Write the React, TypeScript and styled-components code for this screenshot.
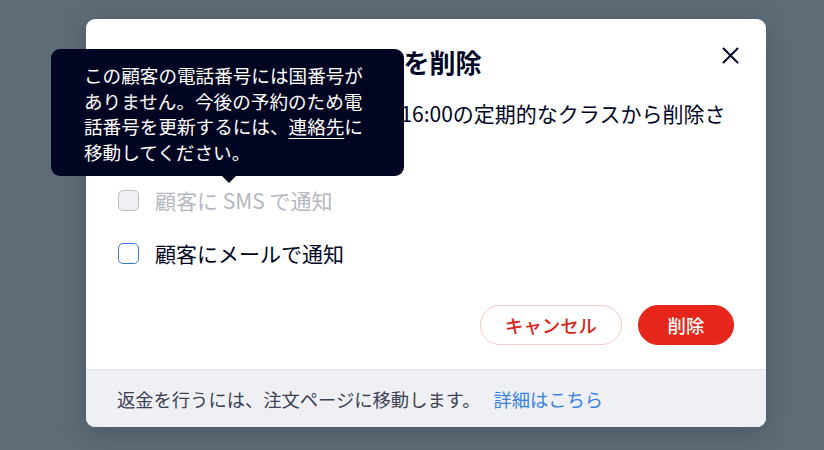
import React from "react";
import styled, { createGlobalStyle } from "styled-components";

const Global = createGlobalStyle`
  html, body { margin: 0; padding: 0; }
  body {
    width: 824px;
    height: 450px;
    background: #5e6c78;
    font-family: "Noto Sans CJK JP", "Noto Sans", sans-serif;
    overflow: hidden;
  }
`;

const Page = styled.div`
  width: 824px;
  height: 450px;
  display: flex;
  justify-content: flex-start;
  padding-top: 19px;
  padding-left: 86px;
  box-sizing: border-box;
`;

const Modal = styled.div`
  position: relative;
  width: 680px;
  height: 408px;
  background: #ffffff;
  border-radius: 9px;
  box-shadow: 0 6px 24px rgba(20, 30, 45, 0.25);
  display: flex;
  flex-direction: column;
  overflow: visible;
`;

const Body = styled.div`
  flex: 1;
  display: flex;
  flex-direction: column;
  padding: 26px 32px 24px 32px;
`;

const Header = styled.div`
  display: flex;
  align-items: center;
  justify-content: space-between;
`;

const Title = styled.h2`
  margin: 0;
  font-size: 26px;
  line-height: 34px;
  font-weight: 700;
  color: #000624;
`;

const CloseButton = styled.button`
  width: 24px;
  height: 24px;
  margin-right: -8px;
  margin-top: -14px;
  padding: 0;
  border: none;
  background: transparent;
  display: flex;
  align-items: center;
  justify-content: center;
  color: #000624;
`;

const Message = styled.p`
  margin: 20px 0 0 0;
  font-size: 21px;
  line-height: 28px;
  color: #000624;
`;

const Options = styled.div`
  display: flex;
  flex-direction: column;
  gap: 25px;
  margin-top: 31px;
`;

const OptionRow = styled.label<{ $disabled?: boolean }>`
  display: flex;
  align-items: center;
  gap: 16px;
  height: 28px;
  font-size: 21px;
  color: ${(p) => (p.$disabled ? "#b5b7c1" : "#000624")};
`;

const Box = styled.span<{ $disabled?: boolean }>`
  width: 21px;
  height: 21px;
  box-sizing: border-box;
  border-radius: 5px;
  border: 1.5px solid ${(p) => (p.$disabled ? "#babbc3" : "#3b79d9")};
  background: ${(p) => (p.$disabled ? "#eff0f3" : "#ffffff")};
  flex: none;
`;

const Actions = styled.div`
  display: flex;
  justify-content: flex-end;
  gap: 16px;
  margin-top: auto;
`;

const Button = styled.button<{ $primary?: boolean }>`
  height: 40px;
  min-width: 96px;
  padding: 0 24px;
  border-radius: 20px;
  font-family: inherit;
  font-size: 18.4px;
  font-weight: 500;
  box-sizing: border-box;
  border: 1px solid ${(p) => (p.$primary ? "#e6261a" : "#f5cbc7")};
  background: ${(p) => (p.$primary ? "#e6261a" : "#ffffff")};
  color: ${(p) => (p.$primary ? "#ffffff" : "#d9251a")};
`;

const Footer = styled.div`
  height: 58px;
  box-sizing: border-box;
  border-top: 1px solid #dde1e8;
  background: #eef0f4;
  border-radius: 0 0 9px 9px;
  display: flex;
  align-items: center;
  padding: 0 31px;
  font-size: 18.3px;
  color: #3e4155;
`;

const Link = styled.a`
  color: #3c82e3;
  margin-left: 13px;
  text-decoration: none;
`;

const Tooltip = styled.div`
  position: absolute;
  left: -35px;
  top: 30px;
  width: 353px;
  box-sizing: border-box;
  padding: 13px 20px 11px 33px;
  background: #020521;
  color: #ffffff;
  border-radius: 9px;
  font-size: 18.6px;
  line-height: 25.7px;
  z-index: 2;

  &::after {
    content: "";
    position: absolute;
    left: 171px;
    bottom: -7px;
    border-left: 7px solid transparent;
    border-right: 7px solid transparent;
    border-top: 7px solid #020521;
  }
`;

const TipLink = styled.span`
  text-decoration: underline;
  text-underline-offset: 4px;
`;

export default function App() {
  return (
    <>
      <Global />
      <Page>
        <Modal>
          <Body>
            <Header>
              <Title>定期的なクラスから顧客を削除</Title>
              <CloseButton aria-label="close">
                <svg width="17" height="17" viewBox="0 0 17 17">
                  <path d="M1.5 1.5 L15.5 15.5 M15.5 1.5 L1.5 15.5" stroke="currentColor" strokeWidth="2" strokeLinecap="round" />
                </svg>
              </CloseButton>
            </Header>
            <Message>
              田中 花子さんは、毎週月曜日 16:00の定期的なクラスから削除さ
              <br />
              れます。
            </Message>
            <Options>
              <OptionRow $disabled>
                <Box $disabled />
                顧客に SMS で通知
              </OptionRow>
              <OptionRow>
                <Box />
                顧客にメールで通知
              </OptionRow>
            </Options>
            <Actions>
              <Button>キャンセル</Button>
              <Button $primary>削除</Button>
            </Actions>
          </Body>
          <Footer>
            返金を行うには、注文ページに移動します。
            <Link href="#">詳細はこちら</Link>
          </Footer>
          <Tooltip>
            この顧客の電話番号には国番号が
            <br />
            ありません。今後の予約のため電
            <br />
            話番号を更新するには、<TipLink>連絡先</TipLink>に
            <br />
            移動してください。
          </Tooltip>
        </Modal>
      </Page>
    </>
  );
}
